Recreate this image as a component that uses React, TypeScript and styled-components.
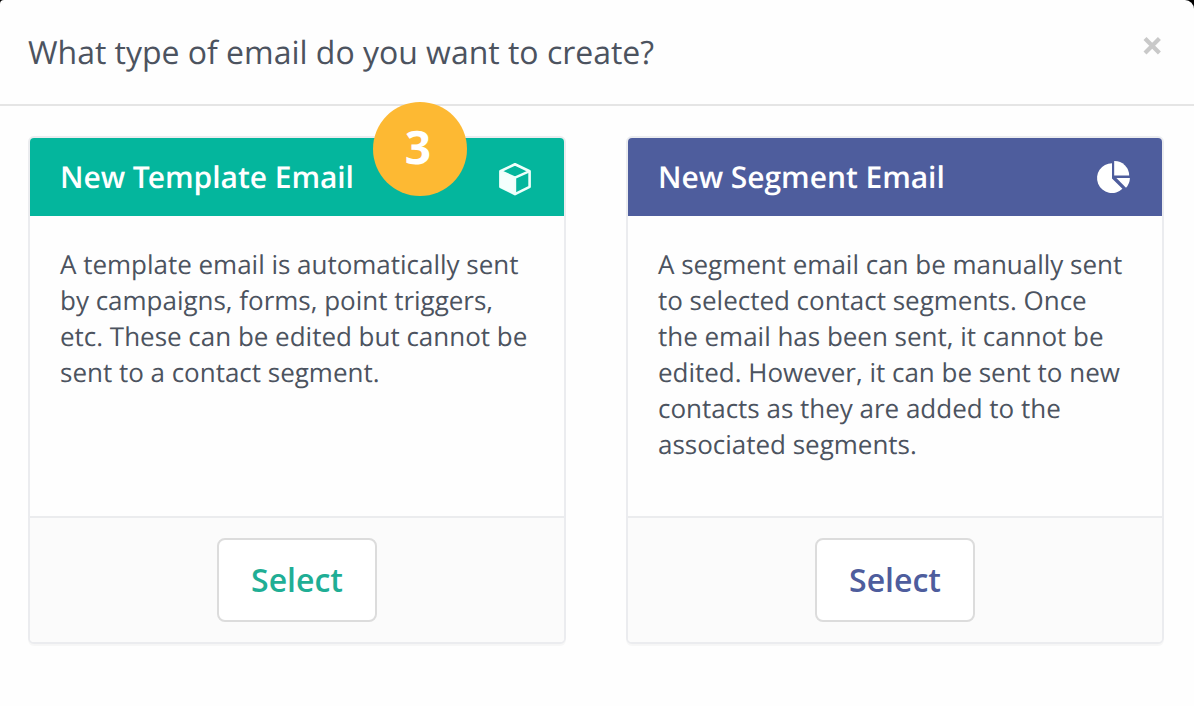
import React from 'react';
import styled, { createGlobalStyle } from 'styled-components';

const GlobalStyle = createGlobalStyle`
  * { box-sizing: border-box; }
  body { margin: 0; background: #000; text-rendering: geometricPrecision; }
`;

const Modal = styled.main`
  height: 706px;
  display: flex;
  flex-direction: column;
  background: #fefefe;
  border-radius: 4px 9px 0 0;
  color: #47535f;
  font-family: 'Open Sans', sans-serif;
`;

const ModalHeader = styled.header`
  height: 106px;
  flex: none;
  display: flex;
  justify-content: space-between;
  align-items: flex-start;
  padding: 31px 32px 0 28px;
  border-bottom: 2px solid #e5e5e5;
`;

const ModalTitle = styled.h1`
  margin: 0;
  font-size: 32px;
  line-height: 44px;
  font-weight: 400;
  letter-spacing: -0.015px;
  color: #4c535f;
`;

const CloseButton = styled.button`
  display: flex;
  margin-top: 6px;
  padding: 0;
  border: 0;
  background: none;
`;

const Cards = styled.div`
  display: grid;
  grid-template-columns: 538px 538px;
  gap: 60px;
  padding: 30px 28px 0;
`;

const Card = styled.section`
  height: 508px;
  display: flex;
  flex-direction: column;
  border: 2px solid #ebecef;
  border-radius: 6px;
  background: #fefefe;
  box-shadow: 0 2px 1px rgba(0, 0, 0, 0.03);
`;

const CardHeader = styled.div<{ $color: string }>`
  position: relative;
  height: 78px;
  flex: none;
  display: flex;
  justify-content: space-between;
  align-items: center;
  padding: 0 30px;
  border-radius: 4px 4px 0 0;
  background: ${(p) => p.$color};
`;

const CardTitle = styled.h2`
  margin: 0;
  font-size: 30px;
  line-height: 40px;
  font-weight: 600;
  letter-spacing: -0.05px;
  color: #fff;
`;

const Kern = styled.span`
  letter-spacing: -2px;
`;

const CardText = styled.p`
  flex: 1;
  margin: 0;
  padding: 30px 0 0 30px;
  font-size: 26px;
  line-height: 36px;
  letter-spacing: -0.015px;
  white-space: nowrap;
  color: #4c535f;
`;

const CardFooter = styled.div`
  height: 126px;
  display: flex;
  justify-content: center;
  align-items: center;
  border-top: 2px solid #ebecee;
  border-radius: 0 0 4px 4px;
  background: #fbfbfb;
`;

const SelectButton = styled.button<{ $color: string }>`
  width: 160px;
  height: 84px;
  padding: 0;
  border: 2px solid #dcdcdc;
  border-radius: 8px;
  background: #fff;
  color: ${(p) => p.$color};
  font: 600 32px/44px 'Open Sans', sans-serif;
`;

const StepBadge = styled.span`
  position: absolute;
  top: -36.5px;
  left: 343px;
  width: 94px;
  height: 94px;
  padding-right: 4px;
  border-radius: 50%;
  background: #fdb933;
  color: #fff;
  font-size: 46px;
  line-height: 91px;
  font-weight: 700;
  text-align: center;
`;

const Icon = styled.svg`
  display: block;
  flex: none;
  overflow: visible;
`;

const CubeIcon = () => (
  <Icon width="36" height="36" viewBox="0 0 36 36">
    <path
      d="M17 5.3 31.6 12.2V27.8L17 35.2 2.4 27.8V12.2Z"
      fill="none"
      stroke="#effffb"
      strokeWidth="2.6"
      strokeLinejoin="round"
    />
    <path d="M2.4 12.2 17 19V35.2L2.4 27.8Z" fill="#f4fffd" />
    <path d="M2.4 12.2 17 18.6 31.6 12.2M17 18.6V35.2" fill="none" stroke="#effffb" strokeWidth="2.4" />
  </Icon>
);

const PieIcon = () => (
  <Icon width="36" height="36" viewBox="0 0 36 36">
    <path d="M16 4.2V19.4L26.4 29.7A14.9 14.9 0 1 1 16 4.2Z" fill="#fff" />
    <path d="M18.2 2A14.6 14.6 0 0 1 33.2 16.6H18.2Z" fill="#fff" />
    <path d="M20.4 19H33.9A15 15 0 0 1 30 28.8Z" fill="#fff" />
  </Icon>
);

const TEAL = '#04b69d';
const INDIGO = '#4e5d9d';

export default function App() {
  return (
    <>
      <GlobalStyle />
      <Modal>
        <ModalHeader>
          <ModalTitle>What type of email do you want to create?</ModalTitle>
          <CloseButton aria-label="Close">
            <Icon width="20" height="18" viewBox="0 0 20 18">
              <path d="M3 1.6 17.4 16M17.4 1.6 3 16" stroke="#c9c9c9" strokeWidth="4.2" />
            </Icon>
          </CloseButton>
        </ModalHeader>
        <Cards>
          <Card>
            <CardHeader $color={TEAL}>
              <CardTitle>New <Kern>T</Kern>emplate Email</CardTitle>
              <CubeIcon />
              <StepBadge>3</StepBadge>
            </CardHeader>
            <CardText>
              A template email is automatically sent<br />
              by campaigns, forms, point triggers,<br />
              etc. These can be edited but cannot be<br />
              sent to a contact segment.
            </CardText>
            <CardFooter>
              <SelectButton $color="#1fae95">Select</SelectButton>
            </CardFooter>
          </Card>
          <Card>
            <CardHeader $color={INDIGO}>
              <CardTitle>New Segment Email</CardTitle>
              <PieIcon />
            </CardHeader>
            <CardText>
              A segment email can be manually sent<br />
              to selected contact segments. Once<br />
              the email has been sent, it cannot be<br />
              edited. However, it can be sent to new<br />
              contacts as they are added to the<br />
              associated segments.
            </CardText>
            <CardFooter>
              <SelectButton $color={INDIGO}>Select</SelectButton>
            </CardFooter>
          </Card>
        </Cards>
      </Modal>
    </>
  );
}
